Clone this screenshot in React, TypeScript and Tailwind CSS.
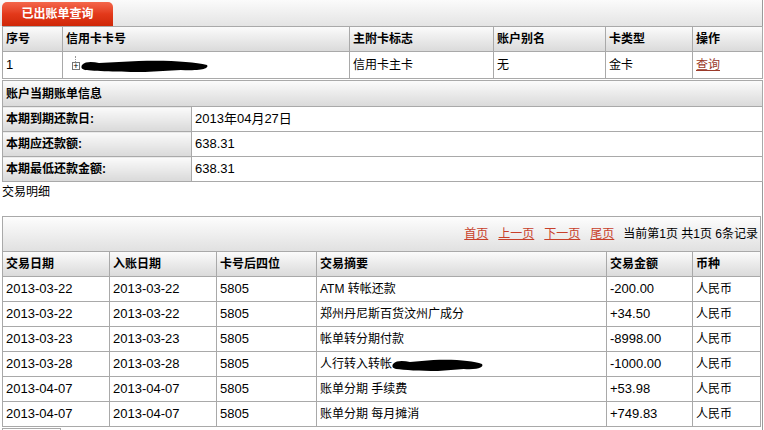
import React from "react";

// 已出账单查询 — legacy bank statement page, three bordered tables.

const FONT = "font-['Liberation_Sans','Noto_Sans_CJK_SC',sans-serif]";
const head = "bg-linear-to-b from-[#fbfbfb] to-[#d9d9d9] font-bold";
const cell = "border border-[#a9a9a9] px-[3px] text-left align-middle";

const trades = [
  ["2013-03-22", "2013-03-22", "5805", "ATM 转帐还款", "-200.00"],
  ["2013-03-22", "2013-03-22", "5805", "郑州丹尼斯百货汶州广成分", "+34.50"],
  ["2013-03-23", "2013-03-23", "5805", "帐单转分期付款", "-8998.00"],
  ["2013-03-28", "2013-03-28", "5805", "人行转入转帐", "-1000.00"],
  ["2013-04-07", "2013-04-07", "5805", "账单分期 手续费", "+53.98"],
  ["2013-04-07", "2013-04-07", "5805", "账单分期 每月摊消", "+749.83"],
];

function Blob({ w }: { w: number }) {
  // redaction scribble
  return (
    <svg width={w} height="14" viewBox={`0 0 ${w} 14`} className="inline-block align-middle">
      <path
        d={`M1 6 C5 2 12 3 18 4 L${w * 0.45} 2 C${w * 0.7} 1 ${w * 0.88} 3 ${w - 2} 6 C${w} 9 ${w - 5} 12 ${w * 0.78} 11 L${w * 0.5} 13 C${w * 0.3} 13 12 12 4 11 C0 10 0 8 1 6 Z`}
        fill="#000"
      />
    </svg>
  );
}

export default function App() {
  return (
    <div className={`w-[764px] h-[430px] overflow-hidden bg-white text-black text-[12px] ${FONT}`}>
      {/* tab strip */}
      <div className="w-[763px] h-[26px] flex items-end pl-[2px] border-r border-[#9a9a9a] bg-linear-to-b from-[#fbfbfb] to-[#e4e4e4]">
        <div className="w-[111px] h-[24px] rounded-t-[5px] bg-linear-to-b from-[#f4664a] via-[#e3391a] to-[#cf2707] text-white font-bold text-[12px] flex items-center justify-center">
          已出账单查询
        </div>
      </div>

      <div className="pl-[2px]">
        <table className="w-[761px] table-fixed border-collapse">
          <colgroup>
            <col className="w-[60px]" />
            <col className="w-[287px]" />
            <col className="w-[144px]" />
            <col className="w-[112px]" />
            <col className="w-[87px]" />
            <col />
          </colgroup>
          <thead>
            <tr className={`h-[25px] ${head}`}>
              {["序号", "信用卡卡号", "主附卡标志", "账户别名", "卡类型", "操作"].map((h) => (
                <th key={h} className={cell}>{h}</th>
              ))}
            </tr>
          </thead>
          <tbody>
            <tr className="h-[27px]">
              <td className={`${cell} text-[13px]`}>1</td>
              <td className={cell}>
                <span className="inline-flex items-center pl-[6px] gap-[1px]">
                  <span className="relative w-[8px] h-[8px] border border-[#777] bg-white text-[9px] leading-[6px] text-center">
                    +
                    <span className="absolute left-[2px] top-[-7px] h-[6px] border-l border-dotted border-[#999]" />
                  </span>
                  <Blob w={128} />
                </span>
              </td>
              <td className={cell}>信用卡主卡</td>
              <td className={cell}>无</td>
              <td className={cell}>金卡</td>
              <td className={cell}>
                <a className="text-[#9b3a2a] underline">查询</a>
              </td>
            </tr>
          </tbody>
        </table>

        <table className="mt-[1px] w-[761px] table-fixed border-collapse">
          <colgroup>
            <col className="w-[189px]" />
            <col />
          </colgroup>
          <tbody>
            <tr className={`h-[26px] ${head}`}>
              <td colSpan={2} className={cell}>账户当期账单信息</td>
            </tr>
            {[
              ["本期到期还款日:", "2013年04月27日"],
              ["本期应还款额:", "638.31"],
              ["本期最低还款金额:", "638.31"],
            ].map(([k, v]) => (
              <tr key={k} className="h-[25px]">
                <td className={`${cell} ${head}`}>{k}</td>
                <td className={`${cell} text-[13px]`}>{v}</td>
              </tr>
            ))}
          </tbody>
        </table>
      </div>

      <div className="w-[763px] border-r border-[#9a9a9a] pl-[2px]">
        <div className="h-[34px] pt-[1px] text-[12px]">交易明细</div>

        <table className="w-[759px] table-fixed border-collapse">
          <colgroup>
            <col className="w-[107px]" />
            <col className="w-[107px]" />
            <col className="w-[100px]" />
            <col className="w-[290px]" />
            <col className="w-[86px]" />
            <col />
          </colgroup>
          <thead>
            <tr className="h-[35px] bg-linear-to-b from-[#fdfdfd] to-[#e0e0e0]">
              <td colSpan={6} className={`${cell} text-right pr-[2px]`}>
                <span className="inline-flex gap-[10px] text-[#c8402a]">
                  <a className="underline">首页</a>
                  <a className="underline">上一页</a>
                  <a className="underline">下一页</a>
                  <a className="underline">尾页</a>
                </span>
                <span className="ml-[9px]">当前第1页 共1页 6条记录</span>
              </td>
            </tr>
            <tr className={`h-[25px] ${head}`}>
              {["交易日期", "入账日期", "卡号后四位", "交易摘要", "交易金额", "币种"].map((h) => (
                <th key={h} className={cell}>{h}</th>
              ))}
            </tr>
          </thead>
          <tbody>
            {trades.map((r, i) => (
              <tr key={i} className="h-[25px]">
                <td className={`${cell} text-[13px]`}>{r[0]}</td>
                <td className={`${cell} text-[13px]`}>{r[1]}</td>
                <td className={`${cell} text-[13px]`}>{r[2]}</td>
                <td className={cell}>
                  {r[3]}
                  {i === 3 ? <Blob w={92} /> : null}
                </td>
                <td className={`${cell} text-[13px]`}>{r[4]}</td>
                <td className={cell}>人民币</td>
              </tr>
            ))}
          </tbody>
        </table>
        <div className="mt-[1px] w-[59px] h-[6px] border-t border-r border-l border-[#a9a9a9]" />
      </div>
    </div>
  );
}
